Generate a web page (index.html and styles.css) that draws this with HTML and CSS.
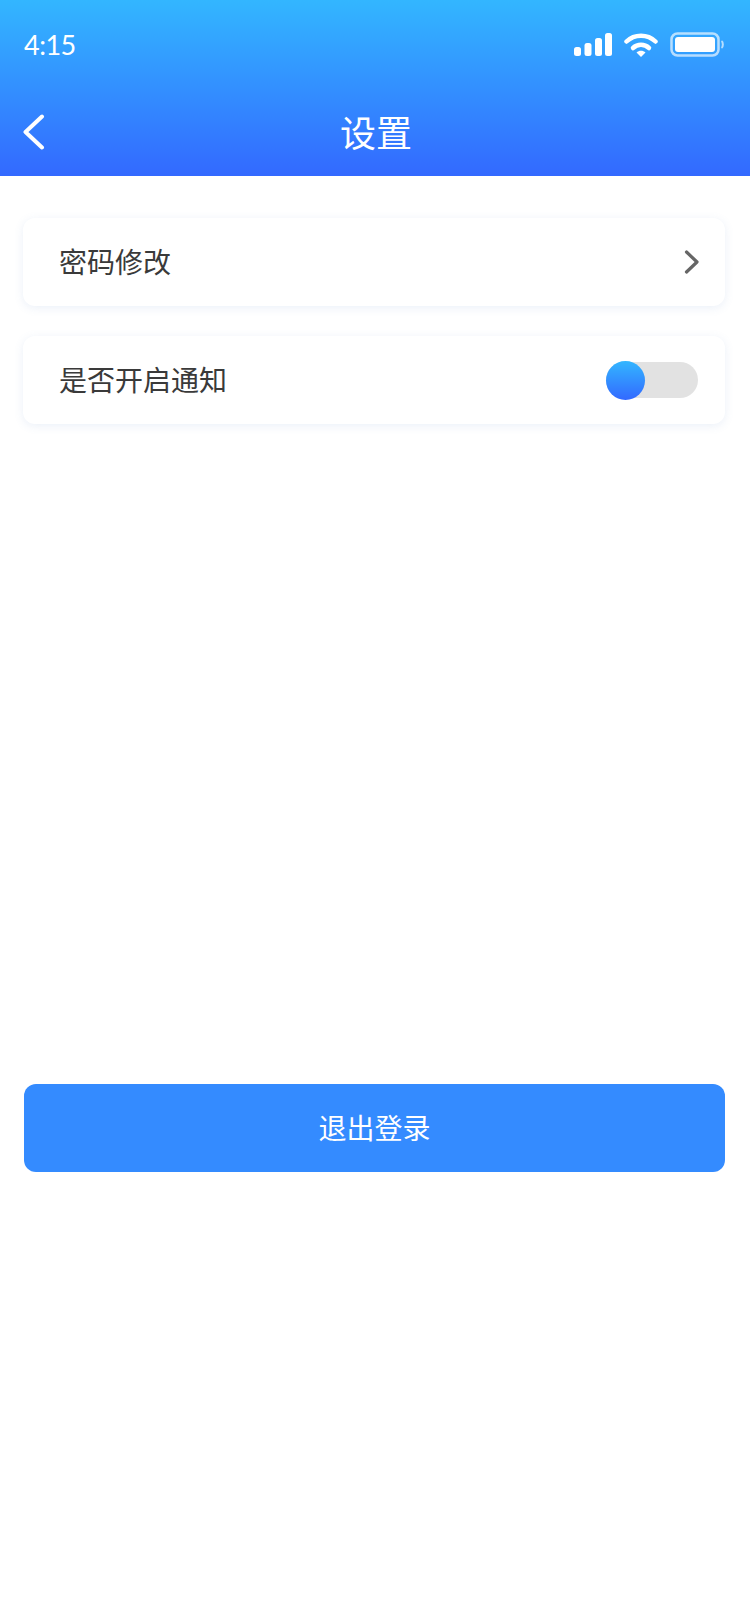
FILE: index.html
```html
<!doctype html>
<html>
<head>
	<meta charset="utf-8">
	<title>设置</title>
	<link rel="stylesheet" href="styles.css">
</head>
<body>

<div class="top">
	<div class="status">
		<span class="time">4:15</span>
		<div class="status-icons">
			<svg class="signal" width="38" height="24" viewBox="0 0 38 24">
				<rect x="0" y="14" width="7" height="9" rx="2.5" fill="#fff"/>
				<rect x="10.500" y="10" width="7" height="13" rx="2.500" fill="#fff"/>
				<rect x="21" y="5" width="7" height="18" rx="2.500" fill="#fff"/>
				<rect x="31" y="0" width="7" height="23" rx="2.500" fill="#fff"/>
			</svg>
			<svg class="wifi" width="34" height="26" viewBox="0 0 34 26">
				<path d="M2.500 9.500C10.500 1.800 23.500 1.800 31.500 9.500" fill="none" stroke="#fff" stroke-width="4.500" stroke-linecap="round"/>
				<path d="M9 16C13.500 11.800 20.500 11.800 25 16" fill="none" stroke="#fff" stroke-width="4.500" stroke-linecap="round"/>
				<path d="M12.500 20.500C15 18 19 18 21.500 20.500L17 25Z" fill="#fff"/>
			</svg>
			<svg class="battery" width="54" height="26" viewBox="0 0 54 26">
				<rect x="1.500" y="1.500" width="47" height="22" rx="6" fill="none" stroke="#fff" stroke-opacity="0.65" stroke-width="2.500"/>
				<rect x="5" y="5" width="40" height="15" rx="3" fill="#fff"/>
				<path d="M51.500 9C53.300 10 53.300 15 51.500 16" fill="none" stroke="#fff" stroke-opacity="0.65" stroke-width="2"/>
			</svg>
		</div>
	</div>
	<div class="nav">
		<svg class="back" width="24" height="36" viewBox="0 0 24 36">
			<path d="M20 2.500L3.500 18L20 33.500" fill="none" stroke="#fff" stroke-width="4" stroke-linecap="round" stroke-linejoin="round"/>
		</svg>
		<h1 class="title">设置</h1>
	</div>
</div>

<div class="content">
	<div class="row">
		<span class="row-label">密码修改</span>
		<svg class="arrow" width="16" height="24" viewBox="0 0 16 24">
			<path d="M2.500 2L13 12L2.500 22" fill="none" stroke="#666" stroke-width="3.200" stroke-linecap="round" stroke-linejoin="round"/>
		</svg>
	</div>
	<div class="row row-switch">
		<span class="row-label">是否开启通知</span>
		<div class="switch">
			<div class="knob"></div>
		</div>
	</div>
</div>

<button class="logout">退出登录</button>

</body>
</html>
```

FILE: styles.css
```css
body {
    margin: 0;
    background: #fff;
    font-family: "Noto Sans CJK SC", "Noto Sans", sans-serif;
}

.top {
    height: 176px;
    background: linear-gradient(180deg, #33b6ff, #3369ff);
    color: #fff;
}

.status {
    height: 88px;
    display: flex;
    align-items: center;
    justify-content: space-between;
    padding: 0 26px 0 24px;
    box-sizing: border-box;
}

.time {
    font-family: Lato, sans-serif;
    font-size: 27px;
    letter-spacing: -0.5px;
}

.status-icons {
    display: flex;
    align-items: center;
    gap: 12px;
    margin-top: 2px;
}

.nav {
    height: 88px;
    display: flex;
    align-items: center;
    justify-content: center;
    position: relative;
}

.back {
    position: absolute;
    left: 22px;
    top: 26px;
}

.title {
    margin: 0 0 3px 2px;
    font-size: 36px;
    font-weight: 400;
}

.content {
    padding: 42px 25px 0 23px;
    display: flex;
    flex-direction: column;
    gap: 30px;
}

.row {
    height: 88px;
    display: flex;
    align-items: center;
    justify-content: space-between;
    padding: 0 25px 0 36px;
    border-radius: 12px;
    background: #fff;
    box-shadow: 0 2px 10px rgba(90, 130, 200, 0.12);
}

.row-switch {
    padding-right: 27px;
}

.row-label {
    margin: 0 0 3px 0;
    font-size: 28px;
    color: #3a3a3a;
}

.arrow {
    display: block;
}

.switch {
    width: 92px;
    height: 36px;
    border-radius: 18px;
    background: #e2e2e2;
    position: relative;
}

.knob {
    position: absolute;
    left: 0;
    top: -1px;
    width: 39px;
    height: 39px;
    border-radius: 50%;
    background: linear-gradient(180deg, #33b6ff, #3369ff);
}

.logout {
    display: block;
    width: 701px;
    height: 88px;
    margin: 660px 0 0 24px;
    padding: 0 0 3px 0;
    border: none;
    border-radius: 12px;
    background: #348bff;
    color: #fff;
    font-family: "Noto Sans CJK SC", "Noto Sans", sans-serif;
    font-size: 28px;
}
```
